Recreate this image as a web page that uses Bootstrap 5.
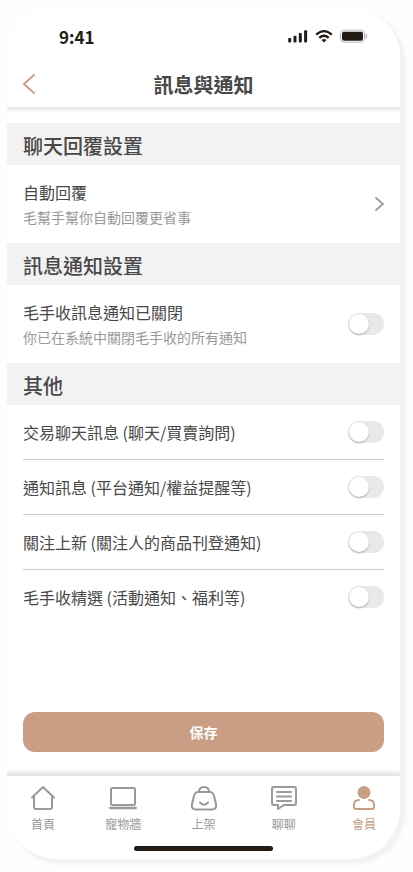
<!DOCTYPE html>
<html lang="zh-Hant">
<head>
<meta charset="utf-8">
<meta name="viewport" content="width=device-width, initial-scale=1">
<title>訊息與通知</title>
<link href="https://cdn.jsdelivr.net/npm/bootstrap@5.3.0/dist/css/bootstrap.min.css" rel="stylesheet">
<style>
body{background:#fefefe;color:#484848;font-family:"Noto Sans CJK TC",sans-serif;font-size:16px;line-height:24px;overflow:hidden;min-height:100vh;padding:7px 0 0 7px}
.phone{width:393px;height:852px;border-radius:50px;background:#fff;box-shadow:4px 4px 0 0 #f2f2f2,4px 4px 4px 1px #f1f1f1;overflow:hidden}
.top-area{height:100px;box-shadow:0 2px 4px 1px #e6e6e6}
.status-bar{height:55px;padding:17px 31px 0 52px;color:#231b16}
.clock{font-size:17px;line-height:26px;font-weight:700}
.status-icons{gap:7px;padding-top:5px}
.title-bar{height:45px;padding:0 16px 2px;display:grid;grid-template-columns:20px 1fr 20px;align-items:center}
.title-bar h1{font-size:20px;line-height:28px;font-weight:700;margin:2px 0 0;text-align:center}
.section-title{height:42px;background:#f2f2f2;font-size:20px;line-height:42px;font-weight:500;padding:2px 16px 0;margin:0}
.detail-row{height:78px;padding:0 16px}
.detail-row p{font-size:14px;line-height:22px;color:#999;margin:2px 0 0}
.option-row{height:55px;margin:0 16px;border-bottom:1px solid #ccc}
.option-row:last-child{border-color:transparent}
.switch{width:36px;height:22px;border-radius:11px;background:#e9e9e9;padding:1px;appearance:none;margin:0;flex:none}
.switch::before{content:"";display:block;width:20px;height:20px;border-radius:50%;background:#fff;box-shadow:0 1px 2px #aaa}
.save{height:40px;background:#c99e85;color:#fff;border-radius:12px;font-size:14px;font-weight:700;line-height:22px;padding:0;border:0}
.save:hover{background:#bd9178;color:#fff}
.tab-area{height:83px;box-shadow:0 -2px 4px 2px #e4e4e4;padding:8px 0 0}
.tabs{display:grid;grid-template-columns:repeat(5,80.25px);justify-content:center;height:50px}
.tabs a{color:#999;font-size:12px;line-height:18px;text-decoration:none;gap:4px}
.tabs a.current{color:#c99e85}
.tabs svg{fill:none;stroke:currentColor;stroke-width:2;stroke-linecap:round;stroke-linejoin:round}
.home-line{width:139px;height:5px;border-radius:3px;background:#231b16;margin:12px auto 0}
</style>
<script src="https://cdn.jsdelivr.net/npm/bootstrap@5.3.0/dist/js/bootstrap.bundle.min.js"></script>
</head>
<body>
<div class="phone d-flex flex-column">
  <header class="top-area flex-shrink-0">
    <div class="status-bar d-flex justify-content-between">
      <span class="clock">9:41</span>
      <div class="status-icons d-flex align-items-start">
        <svg width="20" height="14" viewBox="0 0 20 14" fill="currentColor"><rect x="0.2" y="9" width="3" height="4.5" rx="1"/><rect x="5.5" y="6.800" width="3" height="6.700" rx="1"/><rect x="10.800" y="4" width="3" height="9.500" rx="1"/><rect x="16.100" y="1.300" width="3" height="12.200" rx="1"/></svg>
        <svg width="18" height="14" viewBox="0 0 18 14" fill="none" stroke="currentColor" stroke-width="2.3"><path d="M1.200 5.600Q9 -1.400 16.800 5.600M4.300 8.800Q9 4.600 13.700 8.800"/><path d="M6.500 10.900Q9 8.900 11.500 10.900L9 13.500Z" fill="currentColor" stroke="none"/></svg>
        <svg width="29" height="14" viewBox="0 0 29 14"><rect x="0.500" y="1.200" width="24" height="12" rx="3.500" fill="#fff" stroke="#bbb"/><rect x="2" y="2.700" width="21" height="9" rx="2" fill="currentColor"/><path d="M26 5q2 2.200 0 4.500z" fill="#bbb" stroke="#bbb"/></svg>
      </div>
    </div>
    <div class="title-bar">
      <svg width="14" height="22" viewBox="0 0 14 22" fill="none" stroke="#c99e85" stroke-width="1.900"><path d="M11.500 1.500 1 11 11.500 20.500"/></svg>
      <h1>訊息與通知</h1>
    </div>
  </header>
  <main class="flex-grow-1 d-flex flex-column pt-3">
    <h2 class="section-title">聊天回覆設置</h2>
    <div class="detail-row d-flex justify-content-between align-items-center">
      <div><div>自動回覆</div><p>毛幫手幫你自動回覆更省事</p></div>
      <svg width="10" height="16" viewBox="0 0 10 16" fill="none" stroke="#999" stroke-width="1.700"><path d="M1.500 1.500 9 8 1.500 14.500"/></svg>
    </div>
    <h2 class="section-title">訊息通知設置</h2>
    <div class="detail-row d-flex justify-content-between align-items-center">
      <div><div>毛手收訊息通知已關閉</div><p>你已在系統中關閉毛手收的所有通知</p></div>
      <input class="switch" type="checkbox" role="switch" aria-label="通知">
    </div>
    <h2 class="section-title">其他</h2>
    <div>
      <div class="option-row d-flex justify-content-between align-items-center"><span>交易聊天訊息 (聊天/買賣詢問)</span><input class="switch" type="checkbox" role="switch"></div>
      <div class="option-row d-flex justify-content-between align-items-center"><span>通知訊息 (平台通知/權益提醒等)</span><input class="switch" type="checkbox" role="switch"></div>
      <div class="option-row d-flex justify-content-between align-items-center"><span>關注上新 (關注人的商品刊登通知)</span><input class="switch" type="checkbox" role="switch"></div>
      <div class="option-row d-flex justify-content-between align-items-center"><span>毛手收精選 (活動通知、福利等)</span><input class="switch" type="checkbox" role="switch"></div>
    </div>
    <div class="mt-auto px-3 pb-4"><button class="save btn w-100 d-block">保存</button></div>
  </main>
  <footer class="tab-area flex-shrink-0">
    <nav class="tabs">
      <a href="#" class="d-flex flex-column align-items-center"><svg width="26" height="27" viewBox="0 0 26 27"><path d="M2 13.500 13 3l11 10.500M4 12v11q0 2 2 2h14q2 0 2-2V12"/></svg>首頁</a>
      <a href="#" class="d-flex flex-column align-items-center"><svg width="30" height="27" viewBox="0 0 30 27"><rect x="3" y="4" width="24" height="17" rx="1.500"/><path d="M2 23.500h26v1H2z" stroke-width="1.500"/></svg>寵物牆</a>
      <a href="#" class="d-flex flex-column align-items-center"><svg width="28" height="27" viewBox="0 0 28 27"><path d="M8 8h12q3 0 4 4l2 8q1 5.500-4 5.500H6q-5 0-4-5.500l2-8q1-4 4-4ZM9 8q0-5 5-5t5 5M10 18.500q4 4.500 8 0"/></svg>上架</a>
      <a href="#" class="d-flex flex-column align-items-center"><svg width="26" height="27" viewBox="0 0 26 27"><path d="M3 3h20q2 0 2 2v14q0 2-2 2H13l-6 4v-4H3q-2 0-2-2V5q0-2 2-2ZM6 8h14M6 12.500h14M6 17h14"/></svg>聊聊</a>
      <a href="#" class="current d-flex flex-column align-items-center"><svg width="24" height="27" viewBox="0 0 24 27"><circle cx="12" cy="8.500" r="6.500" fill="currentColor" stroke="none"/><path d="M7 16q-5 0-5 5v2q0 2 2 2h16q2 0 2-2v-2q0-5-5-5"/></svg>會員</a>
    </nav>
    <div class="home-line"></div>
  </footer>
</div>
</body>
</html>
